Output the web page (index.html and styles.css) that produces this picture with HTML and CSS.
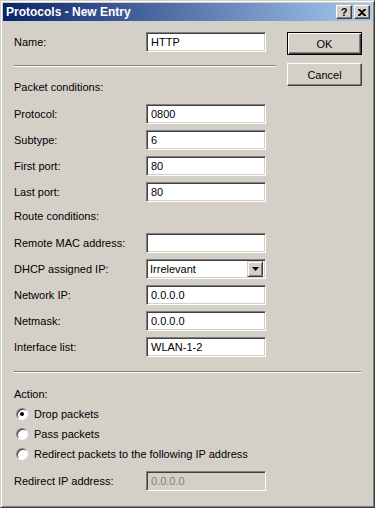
FILE: index.html
```html
<!DOCTYPE html>
<html lang="en">
<head>
    <meta charset="UTF-8">
    <meta name="viewport" content="width=device-width, initial-scale=1.0">
    <title>Protocols - New Entry</title>
    <link rel="stylesheet" href="styles.css">
</head>
<body>
    <div class="window">
        <div class="titlebar">
            <span class="title">Protocols - New Entry</span>
            <div class="caption-buttons">
                <span class="cap-btn">?</span>
                <span class="cap-btn">
                    <svg width="8" height="7" viewBox="0 0 8 7"><path d="M0 0h2l2 2 2-2h2v1L5 3.5 8 6v1H6L4 5 2 7H0V6l3-2.5L0 1z" fill="#000"/></svg>
                </span>
            </div>
        </div>

        <div class="content">
            <div class="top">
                <div class="fields">
                    <div class="row">
                        <label>Name:</label>
                        <div class="input">HTTP</div>
                    </div>

                    <div class="sep"></div>

                    <div class="heading">Packet conditions:</div>
                    <div class="rows">
                        <div class="row"><label>Protocol:</label><div class="input">0800</div></div>
                        <div class="row"><label>Subtype:</label><div class="input">6</div></div>
                        <div class="row"><label>First port:</label><div class="input">80</div></div>
                        <div class="row"><label>Last port:</label><div class="input">80</div></div>
                    </div>

                    <div class="heading route">Route conditions:</div>
                    <div class="rows">
                        <div class="row"><label>Remote MAC address:</label><div class="input"></div></div>
                        <div class="row">
                            <label>DHCP assigned IP:</label>
                            <div class="input select">
                                <span>Irrelevant</span>
                                <span class="drop-btn">
                                    <svg width="7" height="4" viewBox="0 0 7 4"><path d="M0 0h7L3.5 4z" fill="#000"/></svg>
                                </span>
                            </div>
                        </div>
                        <div class="row"><label>Network IP:</label><div class="input">0.0.0.0</div></div>
                        <div class="row"><label>Netmask:</label><div class="input">0.0.0.0</div></div>
                        <div class="row"><label>Interface list:</label><div class="input">WLAN-1-2</div></div>
                    </div>
                </div>

                <div class="buttons">
                    <button class="btn default">OK</button>
                    <button class="btn">Cancel</button>
                </div>
            </div>

            <div class="sep wide"></div>

            <div class="heading action">Action:</div>
            <div class="radio-row"><span class="radio checked"></span>Drop packets</div>
            <div class="radio-row"><span class="radio"></span>Pass packets</div>
            <div class="radio-row"><span class="radio"></span>Redirect packets to the following IP address</div>

            <div class="row redirect">
                <label>Redirect IP address:</label>
                <div class="input disabled">0.0.0.0</div>
            </div>
        </div>
    </div>
</body>
</html>
```

FILE: styles.css
```css
body {
    margin: 0;
    background: #d4d0c8;
    font-family: "Liberation Sans", Arial, sans-serif;
    font-size: 11px;
    color: #000;
}

.window {
    width: 375px;
    height: 508px;
    box-sizing: border-box;
    background: #d4d0c8;
    border: 1px solid;
    border-color: #d4d0c8 #404040 #404040 #d4d0c8;
    box-shadow: inset 1px 1px 0 #fff, inset -1px -1px 0 #808080;
    padding: 2px;
}

.titlebar {
    height: 18px;
    background: linear-gradient(to right, #0a246a, #a6caf0);
    display: flex;
    align-items: center;
    justify-content: space-between;
    padding: 0 2px 0 3px;
}

.title {
    color: #fff;
    font-weight: bold;
    font-size: 12px;
}

.caption-buttons {
    display: flex;
    gap: 2px;
}

.cap-btn {
    width: 16px;
    height: 14px;
    box-sizing: border-box;
    background: #d4d0c8;
    border: 1px solid;
    border-color: #fff #404040 #404040 #fff;
    box-shadow: inset -1px -1px 0 #808080;
    display: flex;
    align-items: center;
    justify-content: center;
    font-weight: bold;
    font-size: 11px;
    line-height: 1;
}

.content {
    padding: 11px 10px 0 11px;
}

.top {
    display: flex;
}

.fields {
    width: 262px;
}

.row {
    display: flex;
    align-items: center;
    height: 20px;
}

.row label {
    width: 132px;
}

.rows {
    display: flex;
    flex-direction: column;
    gap: 6px;
    margin-top: 7px;
}

.input {
    width: 120px;
    height: 20px;
    box-sizing: border-box;
    background: #fff;
    border: 1px solid;
    border-color: #808080 #fff #fff #808080;
    box-shadow: inset 1px 1px 0 #404040, inset -1px -1px 0 #d4d0c8;
    padding: 0 4px;
    line-height: 18px;
    color: #000;
}

.input.select {
    display: flex;
    justify-content: space-between;
    padding: 0 2px 0 3px;
    align-items: center;
}

.drop-btn {
    width: 16px;
    height: 16px;
    box-sizing: border-box;
    background: #d4d0c8;
    border: 1px solid;
    border-color: #d4d0c8 #404040 #404040 #d4d0c8;
    box-shadow: inset 1px 1px 0 #fff, inset -1px -1px 0 #808080;
    display: flex;
    align-items: center;
    justify-content: center;
}

.input.disabled {
    background: #d4d0c8;
    color: #808080;
}

.sep {
    height: 0;
    border-top: 1px solid #808080;
    border-bottom: 1px solid #fff;
    margin-top: 13px;
}

.sep.wide {
    margin-top: 14px;
    margin-right: 1px;
}

.heading {
    height: 20px;
    line-height: 20px;
    margin-top: 10px;
}

.heading.route {
    margin-top: 4px;
}

.heading.action {
    height: 16px;
    line-height: 16px;
    margin-top: 13px;
}

.buttons {
    display: flex;
    flex-direction: column;
    gap: 8px;
    margin-left: 11px;
}

.btn {
    width: 75px;
    height: 23px;
    box-sizing: border-box;
    background: #d4d0c8;
    font-family: inherit;
    font-size: 11px;
    color: #000;
    padding: 0;
    border: 1px solid;
    border-color: #fff #404040 #404040 #fff;
    box-shadow: inset -1px -1px 0 #808080;
}

.btn.default {
    border-color: #000;
    box-shadow: inset 1px 1px 0 #fff, inset -1px -1px 0 #404040, inset -2px -2px 0 #808080;
}

.radio-row {
    display: flex;
    align-items: center;
    height: 20px;
    margin-top: 2px;
}

.radio-row + .radio-row {
    margin-top: 0;
}

.radio {
    width: 12px;
    height: 12px;
    box-sizing: border-box;
    border-radius: 50%;
    background: #fff;
    border: 1px solid;
    border-color: #808080 #fff #fff #808080;
    box-shadow: inset 1px 1px 0 #404040;
    margin: 0 6px 0 2px;
    position: relative;
}

.radio.checked::after {
    content: "";
    position: absolute;
    left: 3px;
    top: 3px;
    width: 4px;
    height: 4px;
    border-radius: 50%;
    background: #000;
}

.row.redirect {
    margin-top: 7px;
}
```
